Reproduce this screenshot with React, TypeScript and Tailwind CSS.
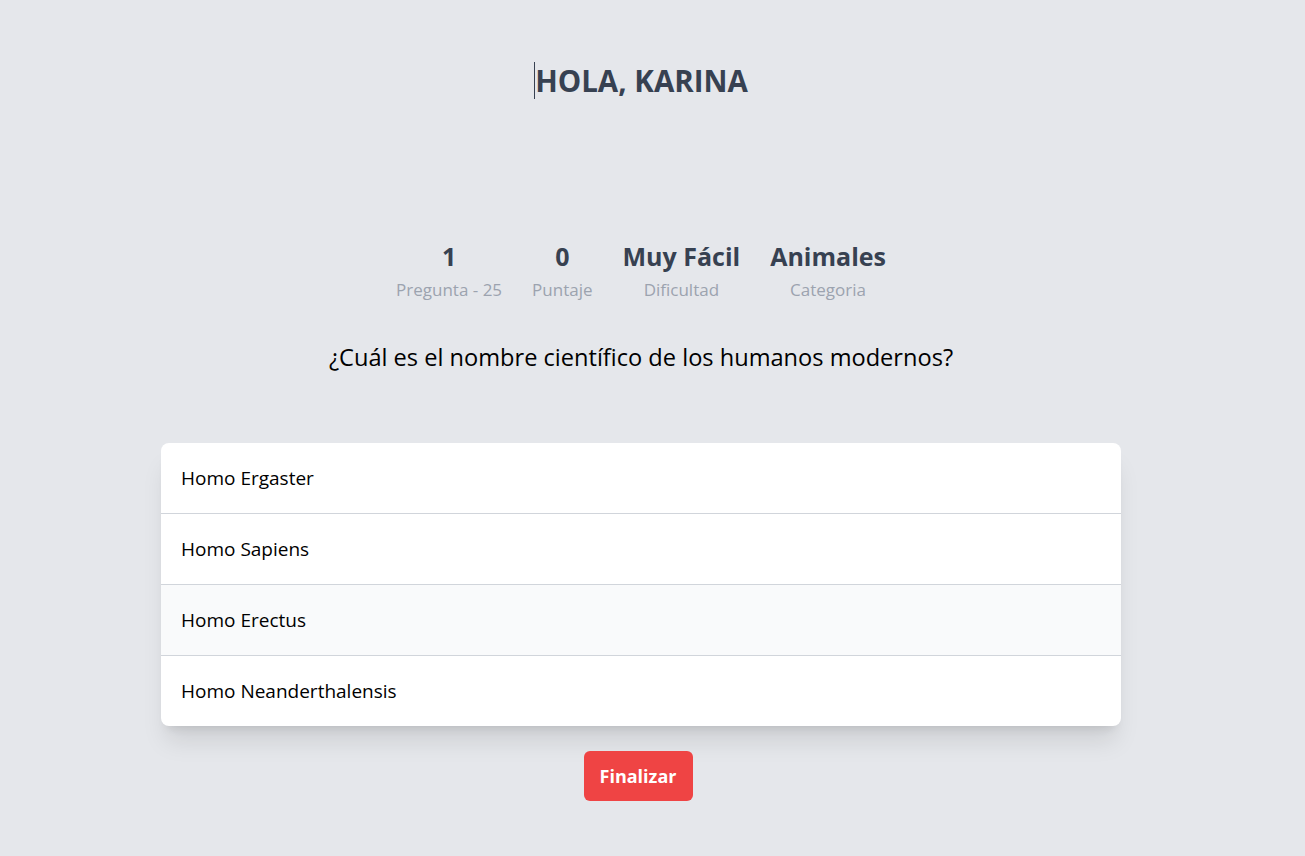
import React from "react";

const options = ["Homo Ergaster", "Homo Sapiens", "Homo Erectus", "Homo Neanderthalensis"];

const stats = [
  { v: "1", l: "Pregunta - 25" },
  { v: "0", l: "Puntaje" },
  { v: "Muy Fácil", l: "Dificultad" },
  { v: "Animales", l: "Categoria" },
];

export default function App() {
  return (
    <div className="min-h-screen bg-[#e5e7eb] flex flex-col items-center font-['Open_Sans',sans-serif] pt-[62px] pr-[23px]">
      <div className="flex items-center">
        <div className="w-px h-[37px] bg-[#374151]" />
        <h1 className="text-[29.5px] leading-9 font-bold text-[#374151]">HOLA, KARINA</h1>
      </div>
      <div className="flex gap-[30px] mt-[141px]">
        {stats.map((s) => (
          <div key={s.l} className="flex flex-col items-center">
            <div className="text-[25px] leading-8 font-bold text-[#374151]">{s.v}</div>
            <div className="text-[17px] leading-6 mt-[6px] text-[#9ca3af]">{s.l}</div>
          </div>
        ))}
      </div>
      <p className="mt-[39px] text-[23.6px] leading-8 text-black">¿Cuál es el nombre científico de los humanos modernos?</p>
      <div className="mt-[70px] w-[960px] bg-white rounded-lg shadow-xl overflow-hidden">
        {options.map((o, i) => (
          <div
            key={o}
            className={`flex items-center px-5 text-[19px] text-black ${i < 3 ? "h-[71px] border-b border-[#d1d5db]" : "h-[70px]"} ${i === 2 ? "bg-[#f9fafb]" : ""}`}
          >
            {o}
          </div>
        ))}
      </div>
      <button className="mt-[25px] h-[50px] w-[109px] rounded-md bg-[#ef4444] text-white text-lg font-bold -translate-x-[3px]">Finalizar</button>
    </div>
  );
}
